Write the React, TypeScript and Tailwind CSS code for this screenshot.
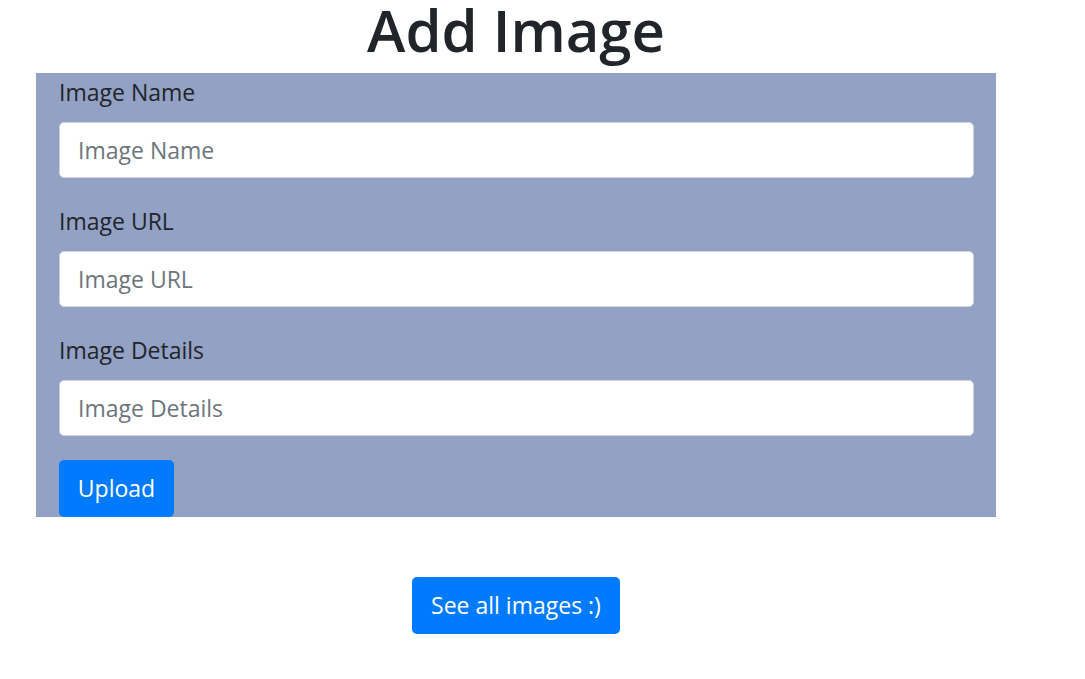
import React from "react";

const font = { fontFamily: '"Open Sans", "Noto Sans", sans-serif' };

const inputCls =
  "h-[56px] w-full rounded-[5px] border border-[#ced4da] bg-white px-[18px] text-[23px] text-[#495057] outline-none placeholder:text-[#6c757d]";
const labelCls = "mb-[15px] text-[23px] leading-[30px] text-[#212529]";

function Field({ label, last }: { label: string; last?: boolean }) {
  return (
    <div className={last ? "flex flex-col" : "mb-[28px] flex flex-col"}>
      <label className={labelCls}>{label}</label>
      <input placeholder={label} className={inputCls} />
    </div>
  );
}

export default function App() {
  return (
    <div className="min-h-[679px] w-[1085px] bg-white" style={font}>
      <div className="ml-[36px] w-[960px]">
        <div className="flex h-[73px] items-start justify-center">
          <h1 className="text-center text-[58px] leading-[60px] font-semibold text-[#212529]">Add Image</h1>
        </div>
        <div className="bg-[#93a1c4] pl-[23px] pr-[22px] pt-[4px]">
          <Field label="Image Name" />
          <Field label="Image URL" />
          <Field label="Image Details" last />
          <button className="mt-[24px] flex h-[57px] w-[115px] items-center justify-center rounded-[5px] bg-[#007bff] text-[23px] text-white">
            Upload
          </button>
        </div>
        <div className="mt-[60px] flex justify-center">
          <button className="flex h-[57px] w-[208px] items-center justify-center rounded-[5px] bg-[#007bff] text-[23px] text-white">
            See all images :)
          </button>
        </div>
      </div>
    </div>
  );
}
